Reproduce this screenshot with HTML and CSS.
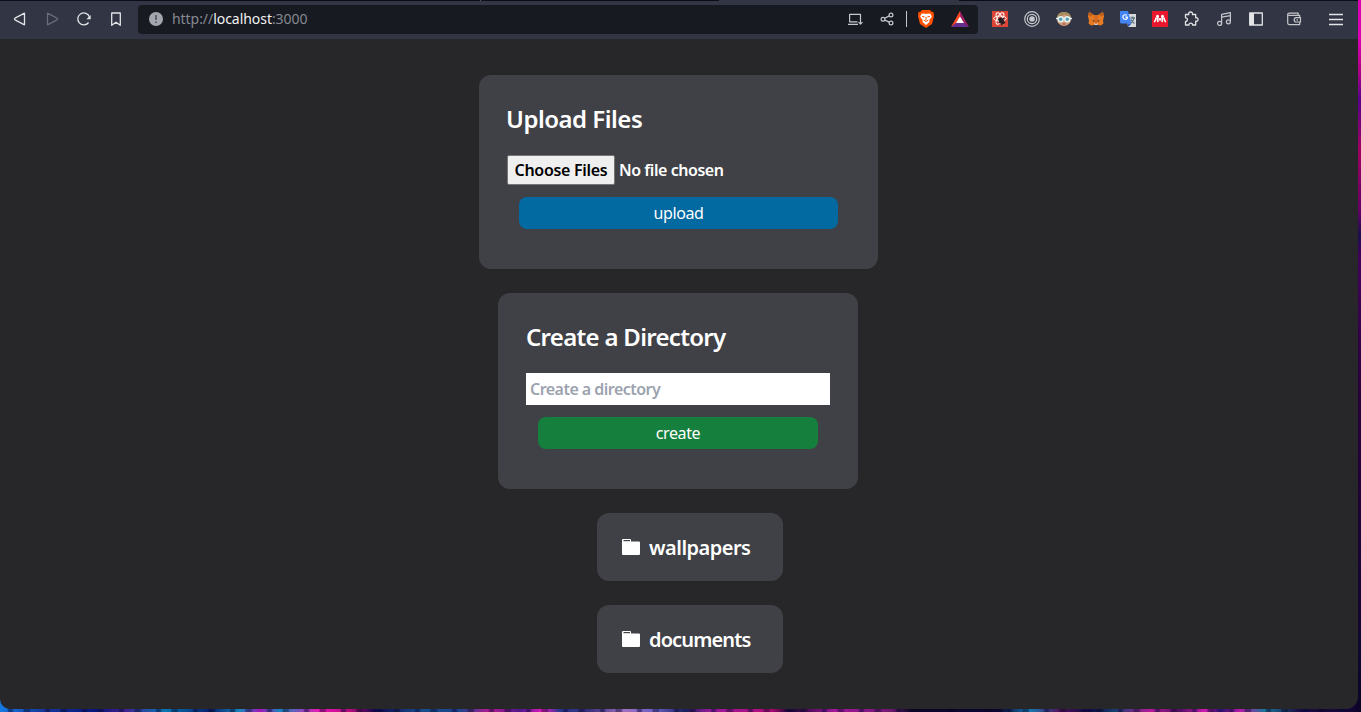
FILE: index.html
```html
<!DOCTYPE html>
<html lang="en">
<head>
<meta charset="utf-8">
<title>localhost:3000</title>
<link rel="stylesheet" href="styles.css">
</head>
<body>
<div class="window">
  <div class="tabline"><span class="tab-edge"></span><span class="tab-active"></span></div>
  <header class="toolbar">
    <nav class="nav">
      <svg class="icon" viewBox="0 0 16 16"><path d="M12.500 2.200v11.600L3 8.800q-1.200-.8 0-1.600z"/></svg>
      <svg class="icon dim" viewBox="0 0 16 16"><path d="M3.500 2.200v11.600L13 8.800q1.200-.8 0-1.600z"/></svg>
      <svg class="icon" viewBox="0 0 16 16"><path d="M12.600 11.500A6 6 0 1 1 13.500 6"/><path class="solid" d="M14.700 4v4.300h-4.300z"/></svg>
      <svg class="icon" viewBox="0 0 16 16"><path d="M3.700 2h8.600v12.300L8 11.200l-4.300 3.100z"/></svg>
    </nav>
    <div class="address">
      <svg class="info" viewBox="0 0 14 14"><circle cx="7" cy="7" r="7" fill="#a3a6ae"/><path d="M7 3v5M7 9.400v1.600" stroke="#565962" stroke-width="1.700"/></svg>
      <span class="url">http://<b>localhost</b>:3000</span>
      <span class="address-actions">
        <svg class="icon soft" viewBox="0 0 16 16"><path d="M13.500 8V3.300H2.600v7.500h7.900M1 13.300h10M13.500 8v5M11.500 11.200l2 2 2-2"/></svg>
        <svg class="icon soft" viewBox="0 0 16 16"><circle cx="4" cy="8.200" r="1.900"/><circle cx="12" cy="4" r="1.900"/><circle cx="12" cy="12" r="1.900"/><path d="M5.700 7.300 10.300 4.900M5.700 9.100 10.300 11.100"/></svg>
        <span class="divider"></span>
        <svg class="brave" viewBox="0 0 16 18"><path fill="#ff5000" d="M4 0h8l1.500 1.700 2 .3.500 4-2 8L8 18l-6-4L0 6l.5-4 2-.3z"/><path fill="#fff" d="M3.500 3.800 6 3.400l2 .6 2-.6 2.500.4 1.300 3-2.600 3.400.3 1.800L8 15l-3.500-3 .3-1.800-2.600-3.400z"/><path stroke="#ff5000" fill="none" d="m4 6.300 2.600.7M12 6.300 9.400 7M8 7v3.200M5.800 10.200 8 11.500l2.200-1.300"/></svg>
        <svg class="bat" viewBox="0 0 18 16"><path fill="#ff4724" d="M9 0 0 16l9-6z"/><path fill="#9e1f63" d="m9 0 9 16-9-6z"/><path fill="#662d91" d="m0 16 6-5h6l6 5z"/><path fill="#fff" d="m9 5.500 4 6.500H5z"/></svg>
      </span>
    </div>
    <div class="extensions">
      <svg class="icon fill" viewBox="0 0 16 16"><path fill="#dc4535" d="M0 0h16v16H0z"/><g fill="none" stroke="#fff" stroke-width="1"><ellipse cx="8" cy="7.500" rx="6.300" ry="2.500"/><ellipse cx="8" cy="7.500" rx="6.300" ry="2.500" transform="rotate(60 8 7.500)"/><ellipse cx="8" cy="7.500" rx="6.300" ry="2.500" transform="rotate(120 8 7.500)"/></g><ellipse cx="9.500" cy="10" rx="2.500" ry="3.700" fill="#291e21" transform="rotate(-35 9.500 10)"/><path d="m6 8 7 4M7 12l5-5M9 14l4-3" stroke="#291e21"/></svg>
      <svg class="icon soft" viewBox="0 0 16 16"><circle cx="8" cy="8" r="7.300"/><circle cx="8" cy="8" r="4.700"/><circle cx="8" cy="8" r="2.200" fill="#c5c7cd"/></svg>
      <svg class="icon fill" viewBox="0 0 16 16"><circle cx="8" cy="8" r="7" fill="#d59b78"/><path fill="#a68b63" d="M1 7Q1 1 8 1t7 6L9 3.500z"/><path stroke="#d8edf0" stroke-width="1.500" d="M0 7.500h16"/><circle cx="4.700" cy="8.300" r="2.500" fill="#5fa0ae" stroke="#e4f4f4" stroke-width="1.400"/><circle cx="11.300" cy="8.300" r="2.500" fill="#5fa0ae" stroke="#e4f4f4" stroke-width="1.400"/><path stroke="#a8604f" d="M6.500 13h3"/></svg>
      <svg class="icon fill" viewBox="0 0 16 16"><path fill="#e77b24" d="m1 .5 5 3.500h4l5-3.500 1 5-1 4 .5 3-2.500 2-3-.5L8.500 15h-1L6 14l-3 .5-2.500-2 .5-3-1-4z"/><path fill="#b75a19" d="m1 .5 4 3.500-3.500 1.500zM15 .5 11 4l3.500 1.500z"/><path fill="#d36a20" d="M6 4h4l-1 8H7z"/><path fill="#352b2b" d="m4 9 3 .7-1 1zM12 9l-3 .7 1 1zM6 13h4l-.5 2h-3z"/><path fill="#ddd" d="m6 12 .5 2h3l.5-2-1.500 1h-1z"/></svg>
      <svg class="icon fill" viewBox="0 0 16 16"><path fill="#d7d9dc" d="M6 3h10v13H8z"/><path fill="#4285f4" d="M0 0h8l3.500 12.500H1L0 11.500z"/><path fill="#3058bd" d="M7.500 12.500h4L8.500 16z"/><path fill="none" stroke="#fff" stroke-width="1.200" d="M5.400 6.200h2.100A2.300 2.300 0 1 1 6.800 4.400"/><path fill="none" stroke="#607580" d="M10.500 7H15M12.500 5.500V7M14 7q-.5 3-3 5M11 8.500q1 2.500 3.500 4"/></svg>
      <svg class="icon fill" viewBox="0 0 16 16"><path fill="#e9172d" d="M0 0h16v16H0z"/><circle cx="5.500" cy="5.200" r="1.500" fill="#fff"/><circle cx="10.500" cy="5.200" r="1.500" fill="#fff"/><path fill="none" stroke="#fff" stroke-width="1.600" d="M2 10.800q1.700-.4 2-4.300M5.700 6q-.2 3.500.3 5M10.300 6q.2 3.500-.3 5M14 10.800q-1.700-.4-2-4.300"/><circle cx="8" cy="8.300" r="1.400" fill="#fff"/></svg>
      <svg class="icon puzzle" viewBox="0 0 16 16"><path d="M2.500 3.500h3.300q-.5-2.500 1.800-2.500t1.800 2.500h3.300v3.300q2.300-.4 2.300 1.700t-2.300 1.700V14H9.500q.2-1.800-1.700-1.800T6 14H2.500v-3.500q1.900.1 1.900-1.900T2.500 6.800z"/></svg>
      <svg class="icon soft" viewBox="0 0 16 16"><circle cx="3.600" cy="12.400" r="2"/><circle cx="12.400" cy="10.800" r="2"/><path d="M5.600 12.400V3.300l8.800-1.600v9.100M5.600 6.200l8.800-1.600"/></svg>
      <svg class="icon" viewBox="0 0 16 16"><path d="M1.700 2h12.600v12H1.700z"/><path class="solid" d="M2 2h4v12H2z"/></svg>
      <svg class="icon soft wallet" viewBox="0 0 16 16"><path d="M13.700 6.500V4.300H3.500q-1.800 0-1.800-1.100T3.500 2.200h8.700v2M1.700 3.200v8.900q0 1.500 1.500 1.500h10.500v-2.400M14.500 6.600H10q-1.800 0-1.800 2.200T10 11h4.500zM10.500 8.800H12"/></svg>
      <svg class="icon menu" viewBox="0 0 16 16"><path d="M1 3.500h14M1 8.500h14M1 13.500h14"/></svg>
    </div>
  </header>
  <main class="page">
    <section class="card upload">
      <h2>Upload Files</h2>
      <div class="file"><button class="choose">Choose Files</button><span>No file chosen</span></div>
      <button class="action blue">upload</button>
    </section>
    <section class="card create">
      <h2>Create a Directory</h2>
      <input class="field" type="text" placeholder="Create a directory">
      <button class="action green">create</button>
    </section>
    <div class="folders">
      <a class="folder"><svg viewBox="0 0 18 16"><path fill="#fff" d="M1 0h7q1 0 1 1v1.500h8q1 0 1 1V15q0 1-1 1H1q-1 0-1-1V1q0-1 1-1z"/><path fill="#404146" d="M1.500 1h6.500v1.200H1.500z"/></svg><span class="wide">wallpapers</span></a>
      <a class="folder"><svg viewBox="0 0 18 16"><path fill="#fff" d="M1 0h7q1 0 1 1v1.500h8q1 0 1 1V15q0 1-1 1H1q-1 0-1-1V1q0-1 1-1z"/><path fill="#404146" d="M1.500 1h6.500v1.200H1.500z"/></svg><span class="tight">documents</span></a>
    </div>
  </main>
</div>
</body>
</html>
```
FILE: styles.css
```css
* { box-sizing: border-box; }
body {
  margin: 0;
  width: 1361px;
  height: 712px;
  overflow: hidden;
  font-family: "Noto Sans", sans-serif;
  background:
    linear-gradient(180deg, #d900b5 0 40px, #b00086 70px, #59008c 100px, #9e0060 150px, #650065 210px, #18104c 235px, #41005a 255px, #260038 400px, #10082f 650px, transparent 690px) right / 3px 100% no-repeat,
    repeating-linear-gradient(90deg, transparent 0 7px, rgba(7, 8, 55, .5) 9px 12px, transparent 14px 23px, rgba(3, 3, 30, .4) 24px 29px, transparent 31px 37px),
    linear-gradient(90deg, #157be4 0, #143b9f 40px, #06167a 95px, #402090 125px, #0877b3 165px, #06206c 210px, #1686bd 240px, #a313b8 260px, #1586bd 280px, #ec14b7 320px, #b50b78 350px, #100749 375px, #174d8d 420px, #1b458c 460px, #b61890 490px, #4c188c 520px, #e517bb 543px, #24388c 560px, #3c307c 590px, #a070c0 625px, #6960c5 655px, #18205c 685px, #96189c 710px, #b50a78 770px, #150632 790px, #a3169d 835px, #701870 890px, #0c0628 910px, #0b0630 1000px, #1678b0 1030px, #55105b 1060px, #0c0a40 1090px, #154070 1115px, #b51999 1150px, #501060 1180px, #cf19b1 1205px, #25106a 1220px, #b519aa 1240px, #197797 1265px, #180a40 1300px, #120531);
}
.window {
  width: 1358px;
  height: 709px;
  overflow: hidden;
  display: flex;
  flex-direction: column;
  background: #272729;
  border-radius: 0 0 12px 10px;
}
.tabline { flex: none; height: 1px; display: flex; background: #0d0c18; }
.tab-edge { width: 481px; border-right: 1px solid #555766; }
.tab-active { margin-left: 238px; width: 240px; background: #323543; }
.toolbar { flex: none; height: 38px; display: flex; align-items: center; background: #323543; padding: 0 14px 2px 12px; }
.icon { flex: none; width: 16px; height: 16px; fill: none; stroke: #e3e4e7; stroke-width: 1.300; stroke-linejoin: round; }
.icon.fill { stroke: none; }
.icon.soft { stroke: #c5c7cd; stroke-width: 1.200; }
.icon.dim { stroke: #686b78; }
.solid { fill: #e3e4e7; stroke: none; }
.nav { display: flex; gap: 16px; width: 126px; }
.address { width: 840px; height: 29px; border-radius: 4px; background: #181a21; display: flex; align-items: center; padding: 0 9px 0 11px; }
.info { width: 14px; height: 14px; fill: none; }
.url { margin-left: 9px; font-size: 14px; line-height: 20px; letter-spacing: -.05px; color: #858991; }
.url b { font-weight: 400; color: #f1f2f3; }
.address-actions { margin-left: auto; display: flex; align-items: center; }
.address-actions .icon + .icon { margin-left: 16px; }
.divider { width: 1px; height: 16px; background: #c5c7cd; margin: 0 11px; }
.brave { width: 16px; height: 18px; }
.bat { width: 18px; height: 16px; margin-left: 17px; }
.extensions { margin-left: 14px; flex: 1; display: flex; gap: 16px; }
.extensions .puzzle { margin: 0 1px 0 -1px; }
.extensions .wallet { margin-left: 6px; }
.extensions .menu { margin-left: auto; }
.page { flex: 1; display: flex; flex-direction: column; align-items: center; gap: 24px; padding: 36px 2px 0 0; color: #fff; }
.card { border-radius: 12px; background: #404146; padding: 28px; display: flex; flex-direction: column; }
.upload { width: 398px; width: 399px; height: 194px; margin-left: 1px; }
.create { width: 360px; height: 196px; }
h2 { margin: 0 0 20px; font-size: 24px; line-height: 32px; font-weight: 600; letter-spacing: -.7px; }
.upload h2 { margin-left: -1px; letter-spacing: -.5px; }
.file { display: flex; align-items: center; height: 30px; gap: 4px; font-size: 16px; font-weight: 600; letter-spacing: -.45px; }
.choose { margin-left: 0; width: 108px; height: 30px; padding: 0; font: 600 16px/24px "Noto Sans", sans-serif; letter-spacing: -.3px; color: #000; background: #efefef; border: 1px solid #767676; border-radius: 2px; white-space: nowrap; }
.action { display: block; width: auto; height: 32px; margin: 12px 12px 0; padding: 0; border: 0; border-radius: 8px; color: #fff; font: 400 16px/24px "Noto Sans", sans-serif; letter-spacing: -.4px; }
.blue { background: #0369a1; }
.green { background: #15803d; }
.field { width: 304px; height: 32px; border: 0; border-radius: 0; padding: 4px; background: #fff; font: 600 16px/24px "Noto Sans", sans-serif; letter-spacing: -.53px; }
.field::placeholder { color: #9ca3af; opacity: 1; }
.folders { display: flex; flex-direction: column; gap: 24px; margin-left: 24px; }
.folder { width: 186px; height: 68px; border-radius: 12px; background: #404146; display: flex; align-items: center; padding: 0 0 0 25px; font-size: 20px; font-weight: 600; }
.folder svg { width: 18px; height: 16px; margin: -1px 9px 0 0; }
.wide { letter-spacing: -.52px; }
.tight { letter-spacing: -.87px; }
```
